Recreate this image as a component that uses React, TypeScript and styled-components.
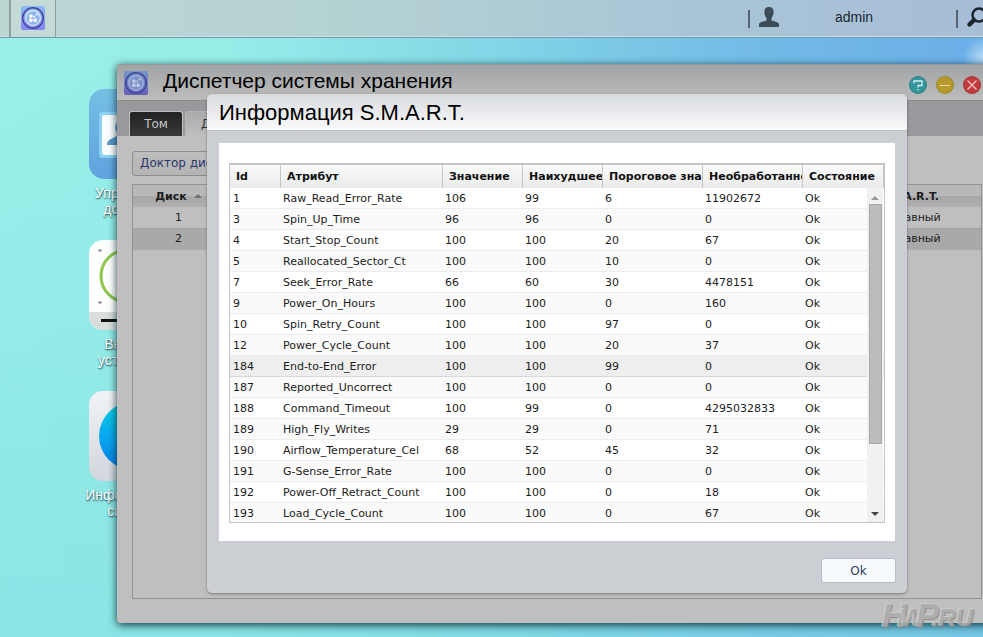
import React from "react";
import styled, { createGlobalStyle } from "styled-components";

const GlobalStyle = createGlobalStyle`
  * { box-sizing: border-box; }
  body { margin: 0; font-family: "DejaVu Sans", Verdana, sans-serif; font-size: 11px; color: #1c1c1c; }
  button { font-family: inherit; cursor: pointer; }
`;

const Desktop = styled.div`
  position: relative;
  min-height: 100vh;
  overflow: hidden;
  background:
    radial-gradient(circle at 100% 9%, rgba(215, 235, 250, 0.7) 0, rgba(215, 235, 250, 0) 20px),
    linear-gradient(180deg, rgba(125, 222, 226, 0) 10%, rgba(125, 220, 224, 0.5) 100%),
    linear-gradient(90deg, #9aefe9 0%, #98ede8 22%, #82d6e6 50%, #73bbe6 76%, #6aafe8 100%);
`;

const TopBar = styled.header`
  display: flex;
  align-items: stretch;
  height: 38px;
  padding-left: 9px;
  overflow: hidden;
  background: linear-gradient(90deg, #bbd5d3 0%, #b5d2d3 35%, #a9c4d7 70%, #a6bed6 100%);
  border-bottom: 1px solid #729cae;
  box-shadow: inset 0 -1px 0 rgba(220, 240, 245, 0.6);
`;

const TaskButton = styled.button`
  display: flex;
  align-items: center;
  justify-content: center;
  width: 47px;
  padding: 0 0 2px;
  border: solid #86a3a2;
  border-width: 0 1px 0 2px;
  background: #c4dad7;
`;

const BarSpacer = styled.div`
  flex: 1;
`;

const Divider = styled.span`
  align-self: center;
  width: 2px;
  height: 18px;
  background: #57646f;
`;

const UserButton = styled.button`
  display: flex;
  align-items: center;
  width: 206px;
  padding: 0 0 3px 8px;
  gap: 55px;
  border: 0;
  background: none;
  font: 14px "Liberation Sans", Arial, sans-serif;
  color: #1c2731;
`;

const SearchButton = styled.button`
  width: 25px;
  flex: none;
  padding: 0 0 0 8px;
  border: 0;
  background: none;
  overflow: hidden;
`;

const Shortcuts = styled.nav`
  display: flex;
  flex-direction: column;
  width: 92px;
  margin: 51px 0 0 88px;
  gap: 20px;
`;

const Shortcut = styled.a`
  display: flex;
  flex-direction: column;
  align-items: center;
  height: 131px;
  gap: 6px;
  color: #fff;
  font: 14px/16px "Liberation Sans", Arial, sans-serif;
  text-align: center;
  white-space: nowrap;
  text-decoration: none;
  text-shadow: 1px 1px 2px #33676c, 0 1px 1px #4c8b90;
  svg { flex: none; }
`;

const Window = styled.section`
  position: absolute;
  top: 64px;
  left: 117px;
  right: -14px;
  bottom: 14px;
  display: flex;
  flex-direction: column;
  border-radius: 4px;
  background: #bfbfbf;
  box-shadow: 0 2px 8px rgba(0, 35, 40, 0.9);
`;

const TitleBar = styled.div`
  display: flex;
  align-items: center;
  height: 36px;
  padding: 0 16px 0 7px;
  gap: 15px;
  border-top: 1px solid #93999c;
  border-radius: 4px 4px 0 0;
  background: linear-gradient(#a1a4a6, #bcbcbc);
  flex: none;
`;

const WindowTitle = styled.h1`
  flex: 1;
  margin: 0;
  padding-bottom: 4px;
  font: 21px/28px "Liberation Sans", Arial, sans-serif;
  color: #000;
`;

const Controls = styled.div`
  display: flex;
  gap: 9px;
  padding-top: 5px;
`;

const RoundButton = styled.button<{ $tone: string }>`
  display: flex;
  align-items: center;
  justify-content: center;
  width: 18px;
  height: 18px;
  padding: 0;
  border: 1px solid rgba(50, 50, 50, 0.2);
  border-radius: 50%;
  background: ${(p) => p.$tone};
`;

const Tabs = styled.div`
  display: flex;
  align-items: flex-end;
  height: 36px;
  padding-left: 12px;
  gap: 2px;
  border-top: 1px solid #8c8c90;
  background: #99999d;
  flex: none;
`;

const Tab = styled.button<{ $dark?: boolean }>`
  width: ${(p) => (p.$dark ? 54 : 86)}px;
  height: 25px;
  padding: 0 0 0 ${(p) => (p.$dark ? 0 : 15)}px;
  border: 1px solid ${(p) => (p.$dark ? "#c0c0c0" : "#b4b4b4")};
  border-bottom: 0;
  border-radius: 3px 3px 0 0;
  font-size: 12px;
  text-align: ${(p) => (p.$dark ? "center" : "left")};
  color: ${(p) => (p.$dark ? "#c8c8c8" : "#333")};
  background: ${(p) => (p.$dark ? "linear-gradient(#222, #3a3a3a)" : "linear-gradient(#aaa, #bfbfbf)")};
`;

const WindowBody = styled.div`
  display: flex;
  flex: 1;
  flex-direction: column;
  align-items: flex-start;
  padding: 15px 15px 24px;
  gap: 8px;
`;

const DoctorButton = styled.button`
  height: 25px;
  padding: 0 7px 2px;
  border: 1px solid #8c8c8c;
  border-radius: 3px;
  background: linear-gradient(#bdbdbd, #b4b4b4);
  color: #2b376c;
  font-size: 12px;
`;

const DiskPanel = styled.div`
  flex: 1;
  align-self: stretch;
  border: 1px solid #929292;
`;

const DiskTable = styled.table`
  width: 100%;
  border-collapse: collapse;
  table-layout: fixed;
  th {
    height: 22px;
    padding: 0;
    font-size: 11px;
    background: linear-gradient(#b8b8b8 50%, #a7a7a7 50%, #b0b0b0);
  }
  td { height: 21px; padding: 0; text-align: center; border-bottom: 1px dotted #999; }
  th:first-child, td:first-child { width: 91px; }
  th:last-child, td:last-child { width: 122px; text-align: left; padding-left: 17px; }
  tbody tr:nth-child(2) td { background: #a9a9a9; }
`;

const SortMark = styled.span`
  display: inline-block;
  margin: 0 0 2px 7px;
  border: solid transparent;
  border-width: 0 4px 4px;
  border-bottom-color: #707070;
`;

const Dialog = styled.section`
  position: absolute;
  top: 94px;
  left: 207px;
  width: 700px;
  border-radius: 5px;
  background: #cbced2;
  box-shadow: 0 1px 3px rgba(0, 0, 0, 0.35);
  overflow: hidden;
`;

const DialogTitle = styled.h2`
  height: 37px;
  margin: 0;
  padding: 0 12px;
  border-bottom: 1px solid #bbbec3;
  background: linear-gradient(#d7dadd, #fafafc);
  font: 22px/37px "Liberation Sans", Arial, sans-serif;
  color: #000;
`;

const DialogPanel = styled.div`
  margin: 12px 12px 0;
  padding: 20px 10px 18px;
  background: #fff;
`;

const GridFrame = styled.div`
  position: relative;
  height: 360px;
  border: 1px solid #c3c3c3;
  border-top-width: 2px;
  overflow: hidden;
`;

const SmartTable = styled.table`
  width: 100%;
  table-layout: fixed;
  border-collapse: separate;
  border-spacing: 0;
`;

const HeadCell = styled.th<{ $width?: number }>`
  width: ${(p) => (p.$width ? `${p.$width}px` : "auto")};
  height: 23px;
  padding: 0 0 0 6px;
  border-right: 1px solid #c6c6c6;
  background: linear-gradient(#fafafa, #e9ebeb);
  font-size: 11px;
  color: #111;
  text-align: left;
  white-space: nowrap;
  overflow: hidden;
`;

const Row = styled.tr<{ $active: boolean }>`
  background: ${(p) => (p.$active ? "#eeeeee" : "#fff")};
  &:nth-child(even) { background: #fafafa; }
  td { border-bottom: 1px solid ${(p) => (p.$active ? "#d9d9d9" : "#ededed")}; }
`;

const Cell = styled.td`
  height: 21px;
  padding: 0 0 0 2px;
  white-space: nowrap;
  overflow: hidden;
  &:first-child { padding-left: 3px; }
`;

const ScrollTrack = styled.div`
  position: absolute;
  top: 23px;
  right: 1px;
  bottom: 0;
  display: flex;
  flex-direction: column;
  align-items: center;
  width: 16px;
  padding: 8px 0 6px;
  background: #f1f1f1;
`;

const ScrollThumb = styled.div`
  width: 13px;
  height: 240px;
  margin: 4px 0 auto;
  border: 1px solid #a8a8a8;
  background: #bcbcbc;
`;

const Arrow = styled.span<{ $down?: boolean }>`
  border: solid transparent;
  border-width: ${(p) => (p.$down ? "4px 4px 0" : "0 4px 4px")};
  border-top-color: ${(p) => (p.$down ? "#444" : "transparent")};
  border-bottom-color: ${(p) => (p.$down ? "transparent" : "#999")};
`;

const DialogFooter = styled.footer`
  display: flex;
  justify-content: flex-end;
  padding: 17px 11px 10px;
`;

const OkButton = styled.button`
  width: 75px;
  height: 25px;
  padding: 0;
  border: 1px solid #b4bbc8;
  border-radius: 3px;
  background: #f7fafd;
  color: #2b3a63;
  font-size: 12px;
`;

const Watermark = styled.div`
  position: absolute;
  right: 10px;
  bottom: 7px;
  display: flex;
  align-items: flex-end;
  font: italic bold 34px/30px "Liberation Sans", Arial, sans-serif;
  color: #acacac;
  text-shadow: -1px -1px 0 #cfcfcf, 1px 1px 1px #858585;
  opacity: 0.85;
`;

const WatermarkPart = styled.span<{ $small?: boolean; $overlap?: number }>`
  margin-left: -${(p) => p.$overlap ?? 0}px;
  font-size: ${(p) => (p.$small ? 24 : 34)}px;
  line-height: ${(p) => (p.$small ? 24 : 30)}px;
`;

const StorageIcon = ({ dim = false }: { dim?: boolean }) => (
  <svg width="24" height="24" viewBox="0 0 24 24" aria-hidden="true">
    <defs>
      <linearGradient id={dim ? "storeDim" : "store"} x1="0" y1="0" x2="0" y2="1">
        <stop offset="0" stopColor={dim ? "#7398c8" : "#8dbdf2"} />
        <stop offset="1" stopColor={dim ? "#6660b5" : "#8585f2"} />
      </linearGradient>
    </defs>
    <rect width="24" height="24" rx="2" fill={`url(#${dim ? "storeDim" : "store"})`} />
    <circle cx="12" cy="12" r="10.3" fill="none" stroke="#41479c" strokeWidth="1.4" />
    <circle cx="12" cy="12" r="7.3" fill={dim ? "#7891c8" : "#8db4ef"} stroke={dim ? "#a9b5db" : "#dcebff"} strokeWidth="1.3" />
    <g fill={dim ? "#c1cbe4" : "#fff"}>
      <rect x="8.2" y="8.4" width="3.4" height="3.4" rx="1" />
      <rect x="8.2" y="12.6" width="3.4" height="3.4" rx="1" />
      <rect x="12.5" y="12.6" width="3.4" height="3.4" rx="1" />
      <circle cx="13.2" cy="10.4" r="1" />
      <circle cx="15.8" cy="8.5" r="1.1" />
    </g>
  </svg>
);

const UsersIcon = () => (
  <svg width="90" height="90" viewBox="0 0 90 90" aria-hidden="true">
    <defs>
      <linearGradient id="users" x1="0" y1="0" x2="0" y2="1">
        <stop offset="0" stopColor="#74bfe3" />
        <stop offset="1" stopColor="#60a1df" />
      </linearGradient>
    </defs>
    <rect width="90" height="90" rx="15" fill="url(#users)" />
    <rect x="10" y="23" width="70" height="46" rx="3" fill="#8bd0f2" />
    <rect x="13" y="26" width="64" height="40" rx="2" fill="#fafdff" />
    <path d="M18 56c0-5 4-6 8-8 3-1 3-3 1-6-2-5 0-10 6-10s8 5 6 10c-2 3-2 5 1 6 4 2 8 3 8 8z" fill="#5796c9" />
  </svg>
);

const DriveIcon = () => (
  <svg width="90" height="90" viewBox="0 0 90 90" aria-hidden="true">
    <defs><clipPath id="drive"><rect width="90" height="90" rx="14" /></clipPath></defs>
    <g clipPath="url(#drive)">
      <rect width="90" height="90" fill="#fdfefe" />
      <rect y="72" width="90" height="18" fill="#d9dddd" />
    </g>
    <circle cx="38" cy="36" r="26" fill="none" stroke="#8fc84d" strokeWidth="3" />
    <path d="M12 80.500h60" stroke="#111" strokeWidth="3" />
    <ellipse cx="11" cy="10.500" rx="1.800" ry="1.200" fill="#9a8f86" />
    <ellipse cx="11" cy="62.500" rx="1.800" ry="1.200" fill="#9a8f86" />
  </svg>
);

const InfoIcon = () => (
  <svg width="90" height="90" viewBox="0 0 90 90" aria-hidden="true">
    <defs>
      <linearGradient id="plate" x1="0" y1="0" x2="0" y2="1">
        <stop offset="0" stopColor="#f1f3f5" /><stop offset="1" stopColor="#d2d6dd" />
      </linearGradient>
      <linearGradient id="disc" x1="0" y1="0" x2="0" y2="1">
        <stop offset="0" stopColor="#08cfe0" /><stop offset="0.5" stopColor="#08a8ee" /><stop offset="1" stopColor="#087be6" />
      </linearGradient>
    </defs>
    <rect width="90" height="90" rx="14" fill="url(#plate)" />
    <circle cx="44" cy="45" r="34" fill="url(#disc)" />
  </svg>
);

const shortcuts = [
  { icon: <UsersIcon />, lines: ["Управление", "доступом"] },
  { icon: <DriveIcon />, lines: ["Внешние", "устройства"] },
  { icon: <InfoIcon />, lines: ["Информация о", "системе"] },
];

const columns: { label: string; width?: number }[] = [
  { label: "Id", width: 51 },
  { label: "Атрибут", width: 162 },
  { label: "Значение", width: 80 },
  { label: "Наихудшее", width: 80 },
  { label: "Пороговое значение", width: 100 },
  { label: "Необработанное", width: 100 },
  { label: "Состояние" },
];

const attributes: [number, string, number, number, number, number][] = [
  [1, "Raw_Read_Error_Rate", 106, 99, 6, 11902672],
  [3, "Spin_Up_Time", 96, 96, 0, 0],
  [4, "Start_Stop_Count", 100, 100, 20, 67],
  [5, "Reallocated_Sector_Ct", 100, 100, 10, 0],
  [7, "Seek_Error_Rate", 66, 60, 30, 4478151],
  [9, "Power_On_Hours", 100, 100, 0, 160],
  [10, "Spin_Retry_Count", 100, 100, 97, 0],
  [12, "Power_Cycle_Count", 100, 100, 20, 37],
  [184, "End-to-End_Error", 100, 100, 99, 0],
  [187, "Reported_Uncorrect", 100, 100, 0, 0],
  [188, "Command_Timeout", 100, 99, 0, 4295032833],
  [189, "High_Fly_Writes", 29, 29, 0, 71],
  [190, "Airflow_Temperature_Cel", 68, 52, 45, 32],
  [191, "G-Sense_Error_Rate", 100, 100, 0, 0],
  [192, "Power-Off_Retract_Count", 100, 100, 0, 18],
  [193, "Load_Cycle_Count", 100, 100, 0, 67],
];

export default function App() {
  return (
    <Desktop>
      <GlobalStyle />
      <TopBar>
        <TaskButton aria-label="Диспетчер системы хранения"><StorageIcon /></TaskButton>
        <BarSpacer />
        <Divider />
        <UserButton>
          <svg width="22" height="22" viewBox="0 0 22 22" fill="#3c4b55" aria-hidden="true">
            <path d="M11 1c4 0 5 3 4.500 6.500-.3 2-1.500 3.500-2 4.500v2.500c3 1 7 1.500 7.500 3.500v3H1v-3c.5-2 4.500-2.500 7.500-3.500V12c-.5-1-1.700-2.500-2-4.500C6 4 7 1 11 1z" />
          </svg>
          admin
        </UserButton>
        <Divider />
        <SearchButton aria-label="Поиск">
          <svg width="26" height="22" viewBox="0 0 26 22" fill="none" stroke="#1c272f" aria-hidden="true">
            <circle cx="13" cy="9" r="6.500" strokeWidth="2.500" />
            <path d="M8 14l-4.500 4.500" strokeWidth="4.500" strokeLinecap="round" />
          </svg>
        </SearchButton>
      </TopBar>

      <Shortcuts>
        {shortcuts.map(({ icon, lines }) => (
          <Shortcut href="#" key={lines[0]}>
            {icon}
            <span>{lines[0]}<br />{lines[1]}</span>
          </Shortcut>
        ))}
      </Shortcuts>

      <Window>
        <TitleBar>
          <StorageIcon dim />
          <WindowTitle>Диспетчер системы хранения</WindowTitle>
          <Controls>
            <RoundButton $tone="#31959b" aria-label="Справка">
              <svg width="12" height="12" viewBox="0 0 12 12" fill="none" stroke="#d5eced" strokeWidth="1.300">
                <path d="M2 4.500V2h8v4.500H6V8.500M6 10v1.500" />
              </svg>
            </RoundButton>
            <RoundButton $tone="#b79a2c" aria-label="Свернуть">
              <svg width="12" height="12" viewBox="0 0 12 12" stroke="#e5dba9"><path d="M1 6.500h10" /></svg>
            </RoundButton>
            <RoundButton $tone="#c23a3c" aria-label="Закрыть">
              <svg width="12" height="12" viewBox="0 0 12 12" stroke="#edc9c6" strokeWidth="1.300"><path d="M1.500 1.500l9 9M10.500 1.500l-9 9" /></svg>
            </RoundButton>
          </Controls>
        </TitleBar>
        <Tabs>
          <Tab $dark>Том</Tab>
          <Tab>Диск</Tab>
        </Tabs>
        <WindowBody>
          <DoctorButton>Доктор дисков</DoctorButton>
          <DiskPanel>
            <DiskTable>
              <thead><tr><th>Диск<SortMark /></th><th /><th>S.M.A.R.T.</th></tr></thead>
              <tbody>
                <tr><td>1</td><td /><td>Исправный</td></tr>
                <tr><td>2</td><td /><td>Исправный</td></tr>
              </tbody>
            </DiskTable>
          </DiskPanel>
        </WindowBody>
      </Window>

      <Dialog role="dialog" aria-labelledby="smart-title">
        <DialogTitle id="smart-title">Информация S.M.A.R.T.</DialogTitle>
        <DialogPanel>
          <GridFrame>
            <SmartTable>
              <thead>
                <tr>{columns.map((c) => <HeadCell key={c.label} $width={c.width}>{c.label}</HeadCell>)}</tr>
              </thead>
              <tbody>
                {attributes.map((row) => (
                  <Row key={row[0]} $active={row[0] === 184}>
                    {row.map((value, i) => <Cell key={i}>{value}</Cell>)}
                    <Cell>Ok</Cell>
                  </Row>
                ))}
              </tbody>
            </SmartTable>
            <ScrollTrack>
              <Arrow />
              <ScrollThumb />
              <Arrow $down />
            </ScrollTrack>
          </GridFrame>
        </DialogPanel>
        <DialogFooter><OkButton>Ok</OkButton></DialogFooter>
      </Dialog>

      <Watermark aria-hidden="true">
        <WatermarkPart>H</WatermarkPart>
        <WatermarkPart $small $overlap={6}>W</WatermarkPart>
        <WatermarkPart $overlap={7}>P</WatermarkPart>
        <WatermarkPart $small $overlap={7}>.RU</WatermarkPart>
      </Watermark>
    </Desktop>
  );
}
